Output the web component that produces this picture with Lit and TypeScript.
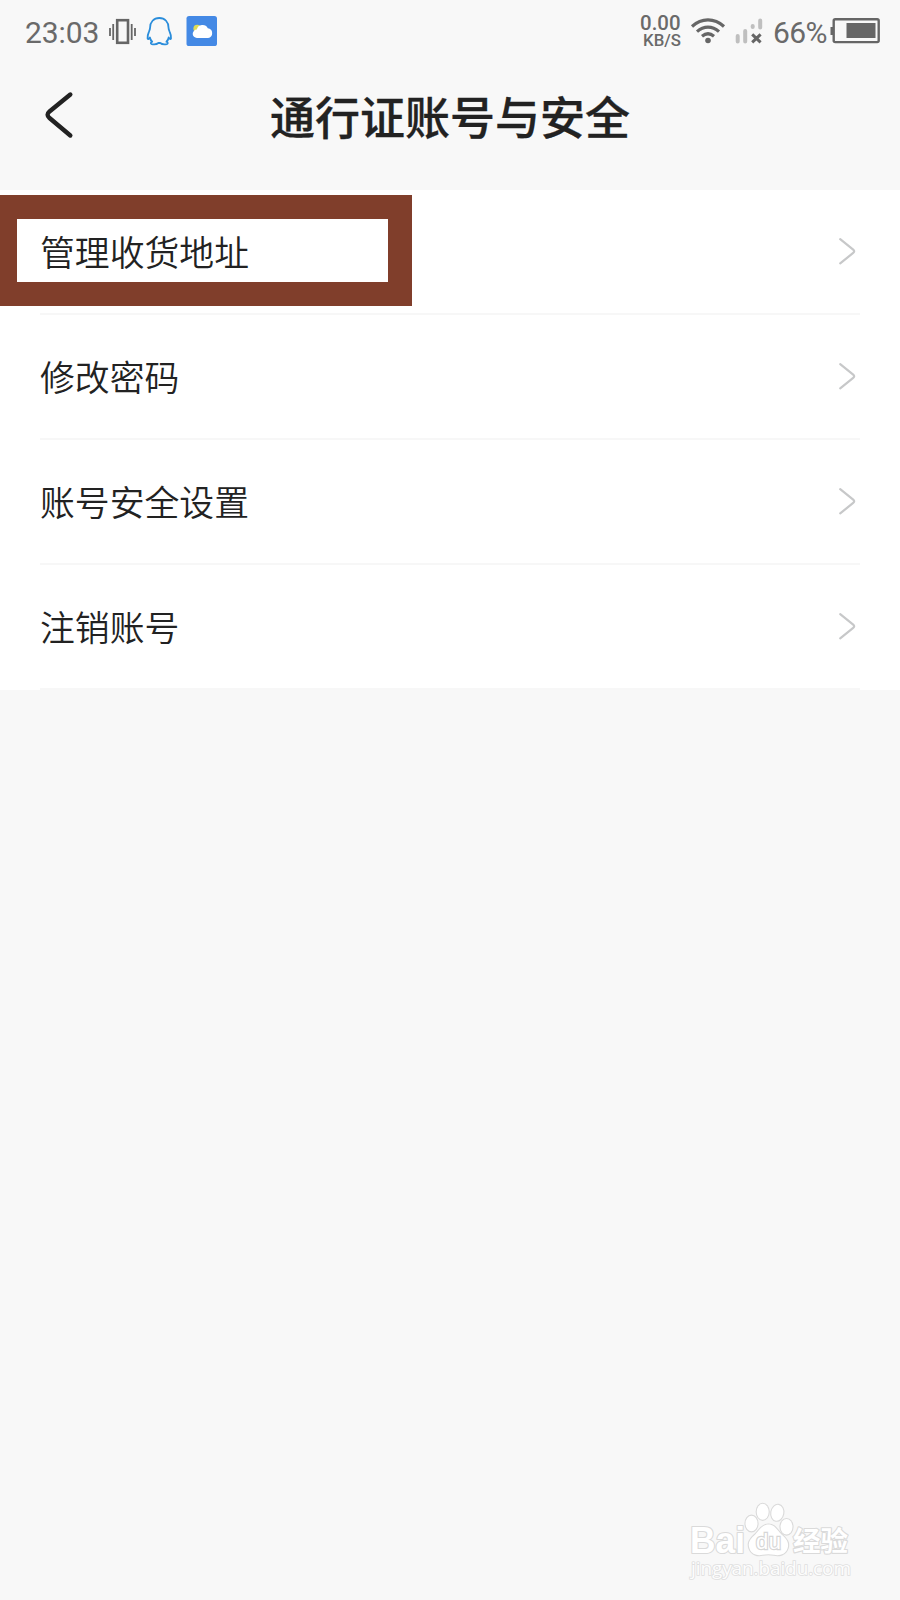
import { LitElement, html, css } from "lit";
import { customElement, property } from "lit/decorators.js";

@customElement("status-bar")
class StatusBar extends LitElement {
  static styles = css`
    :host {
      display: flex;
      justify-content: space-between;
      height: 62px;
      padding: 0 20px 0 25px;
      color: #6a6a6a;
      font-family: Roboto, "Liberation Sans", sans-serif;
      font-size: 30px;
      line-height: 62px;
    }
    .side { display: flex; align-items: center; height: 62px; }
    .clock { width: 84px; padding-top: 3px; letter-spacing: -0.1px; }
    .percent { width: 57px; padding: 3px 0 0 1px; letter-spacing: -0.6px; white-space: nowrap; }
    svg { display: block; flex: none; }
    .rate {
      display: flex;
      flex-direction: column;
      align-items: flex-end;
      width: 42px;
      margin-right: 9px;
      padding-top: 1px;
      font-weight: 500;
    }
    .value { font-size: 20.4px; line-height: 17px; padding-right: 0.5px; }
    .unit { font-size: 16.8px; line-height: 16px; }
  `;

  render() {
    return html`
      <div class="side">
        <span class="clock">23:03</span>
        <svg width="110" height="62" viewBox="109 0 110 62" fill="none">
          <path d="M110 28v8M113.200 24v16M131.700 24v16M135 28v8" stroke="#666" stroke-width="1.8" />
          <rect x="117.200" y="20.200" width="10.800" height="22.600" stroke="#666" stroke-width="2.600" />
          <path
            d="M159.300 18c-5.700 0-9.200 4.200-9.200 9.400 0 1.700-.6 3-1.200 4.500-1 2.300-1.500 4-1.300 6.300.1 1.500 1.100 1.200 2.300-.7.4 2 1 3.200 2.300 4.300-1.600.7-1.900 1.900-.5 2.300 2.500.5 5.300.1 6.700-1.100h1.800c1.400 1.200 4.200 1.600 6.700 1.100 1.400-.4 1.100-1.600-.5-2.300 1.300-1.100 1.900-2.300 2.300-4.300 1.200 1.900 2.200 2.200 2.300.7.200-2.300-.3-4-1.300-6.300-.6-1.500-1.200-2.800-1.200-4.500 0-5.200-3.500-9.400-9.200-9.400z"
            stroke="#2a8ddb" stroke-width="1.800" stroke-linejoin="round" />
          <rect x="186.500" y="16" width="30.500" height="30" rx="2.600" fill="#4489e5" />
          <circle cx="197.200" cy="28.500" r="3.800" fill="#dfdc55" />
          <path d="M197 38a4.200 4.200 0 0 1-.2-8.400 5.900 5.900 0 0 1 11-1.300 4.900 4.900 0 0 1 .3 9.700z" fill="#fff" />
        </svg>
      </div>
      <div class="side">
        <div class="rate"><span class="value">0.00</span><span class="unit">KB/S</span></div>
        <svg width="82" height="62" viewBox="690.300 0 82 62" fill="none">
          <path d="M692.300 26.500c9.600-8.700 22.300-8.700 32 0M697.300 31.600c6.800-6 15.200-6 22 0M702.300 36.300c3.800-3.200 8.200-3.200 12 0" stroke="#666" stroke-width="3.200" />
          <circle cx="708.300" cy="40.500" r="2.800" fill="#666" />
          <path d="M738 36v5.500M745.500 31v10.500M753 26v1M760.500 20.500v7" stroke="#bfbfbf" stroke-width="4" stroke-linecap="round" />
          <path d="M752.500 34.300l8.400 8M760.900 34.300l-8.400 8" stroke="#666" stroke-width="3" />
        </svg>
        <span class="percent">66%</span>
        <svg width="50" height="62" viewBox="830 0 50 62">
          <path d="M830.500 27h3v8h-3z" fill="#666" />
          <rect x="833.700" y="19.200" width="45" height="22.900" rx="1.500" fill="none" stroke="#666" stroke-width="2.400" />
          <path d="M846.500 23h29v15h-29z" fill="#666" />
        </svg>
      </div>
    `;
  }
}

@customElement("setting-row")
class SettingRow extends LitElement {
  static styles = css`
    :host { display: block; padding: 0 40px; }
    .row {
      display: flex;
      align-items: center;
      justify-content: space-between;
      box-sizing: border-box;
      height: 125px;
      border-bottom: 2px solid #f7f7f7;
      color: #222;
      font-family: "Noto Sans CJK SC", sans-serif;
      font-size: 34.85px;
      font-weight: 350;
      line-height: 50px;
    }
    .label { padding-bottom: 2px; }
  `;

  @property() label = "";

  render() {
    return html`
      <div class="row">
        <span class="label">${this.label}</span>
        <svg width="24" height="30" viewBox="0 0 24 30" fill="none">
          <path d="M4.200 2.200L17.200 12.700q2 1.600 0 3.200L4.200 26.400" stroke="#c7c8c9" stroke-width="2.200" stroke-linecap="round" />
        </svg>
      </div>
    `;
  }
}

@customElement("paw-watermark")
class PawWatermark extends LitElement {
  static styles = css`
    :host { display: block; }
    svg { display: block; }
    .ink { fill: #fff; stroke: #dadada; stroke-width: 2.2; paint-order: stroke; stroke-linejoin: round; }
    .latin { font-family: "Liberation Sans", sans-serif; font-weight: 700; }
    .han { font-family: "Noto Sans CJK SC", sans-serif; font-weight: 700; }
    .du { fill: #fff; stroke: #d6d6d6; stroke-width: 2.4; paint-order: stroke; font-weight: 400; }
    .site { font-family: "Open Sans", sans-serif; fill: #fdfdfd; stroke: #dfdfdf; stroke-width: 1.7; paint-order: stroke; }
  `;

  render() {
    return html`
      <svg width="180" height="90" viewBox="680 1495 180 90">
        <text class="ink latin" x="690" y="1553" font-size="36" textLength="55" lengthAdjust="spacingAndGlyphs">Bai</text>
        <g class="ink">
          <ellipse cx="751.500" cy="1523.500" rx="6" ry="7.800" />
          <ellipse cx="762.700" cy="1511.800" rx="6" ry="8" />
          <ellipse cx="777.300" cy="1512.800" rx="6" ry="8" transform="rotate(10 777.300 1512.800)" />
          <ellipse cx="786.500" cy="1526.800" rx="6" ry="7.800" />
          <path d="M768.500 1524.500c-7 0-9.500 6.500-13.500 10.200-5.500 4.800-7.500 8.300-5.500 13.800 2 6.300 8.500 7.300 13 6.300 4-.9 7.500-.9 11.500 0 5 1.100 11.500 0 13.500-6.300 2-6-1-9.500-6-14-4.500-4.300-6.500-10-13-10z" />
        </g>
        <text class="latin du" x="756" y="1549" font-size="22" textLength="25">du</text>
        <text class="ink han" x="793" y="1551" font-size="27.500">经验</text>
        <text class="site" x="691" y="1575" font-size="19" textLength="160">jingyan.baidu.com</text>
      </svg>
    `;
  }
}

@customElement("app-root")
class AppRoot extends LitElement {
  static styles = css`
    :host {
      display: block;
      position: relative;
      height: 1600px;
      overflow: hidden;
      background: #f8f8f8;
    }
    .header {
      display: grid;
      grid-template-columns: 110px 1fr 110px;
      align-items: center;
      height: 128px;
    }
    .back { display: block; margin: -22px 0 0 40px; }
    .title {
      margin: 0;
      padding-bottom: 21px;
      color: #222;
      font: 500 45px/70px "Noto Sans CJK SC", sans-serif;
      text-align: center;
      white-space: nowrap;
      -webkit-text-stroke: 0.3px #222;
    }
    .list { background: #fff; }
    .frame {
      position: absolute;
      top: 195px;
      left: 0;
      box-sizing: border-box;
      width: 412px;
      height: 111px;
      border: solid #803e2b;
      border-width: 24px 24px 24px 17px;
    }
    .mark { position: absolute; top: 1495px; left: 680px; }
  `;

  private items = ["管理收货地址", "修改密码", "账号安全设置", "注销账号"];

  render() {
    return html`
      <status-bar></status-bar>
      <header class="header">
        <svg class="back" width="40" height="60" viewBox="40 85 40 60" fill="none">
          <path d="M70.300 94.500L49.500 111.500q-3.800 3.200 0 6.500L70.300 135.500" stroke="#222" stroke-width="4.400" stroke-linecap="round" />
        </svg>
        <h1 class="title">通行证账号与安全</h1>
      </header>
      <main class="list">
        ${this.items.map((label) => html`<setting-row .label=${label}></setting-row>`)}
      </main>
      <div class="frame"></div>
      <paw-watermark class="mark"></paw-watermark>
    `;
  }
}
